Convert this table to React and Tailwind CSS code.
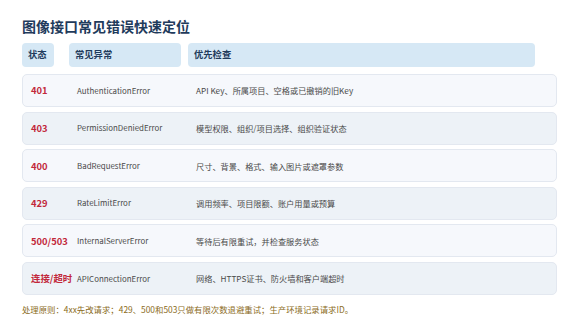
import React from "react";

const rows = [
  ["401", "AuthenticationError", "API Key、所属项目、空格或已撤销的旧Key"],
  ["403", "PermissionDeniedError", "模型权限、组织/项目选择、组织验证状态"],
  ["400", "BadRequestError", "尺寸、背景、格式、输入图片或遮罩参数"],
  ["429", "RateLimitError", "调用频率、项目限额、账户用量或预算"],
  ["500/503", "InternalServerError", "等待后有限重试，并检查服务状态"],
  ["连接/超时", "APIConnectionError", "网络、HTTPS证书、防火墙和客户端超时"],
];

export default function App() {
  return (
    <div
      className="w-[579px] h-[326px] bg-white pl-[22px] pt-[15px] overflow-hidden"
      style={{ fontFamily: '"Noto Sans CJK SC", "Noto Sans", sans-serif' }}
    >
      <h1 className="text-[14px] leading-[22px] font-bold text-[#1f3b5c]">
        图像接口常见错误快速定位
      </h1>
      <div className="mt-[6px] flex h-[24px] text-[9.3px] font-bold text-[#1f3b5c]">
        <div className="w-[32px] rounded-[4px] bg-[#d6e8f5] flex items-center pl-[6px]">状态</div>
        <div className="ml-[15px] w-[112px] rounded-[4px] bg-[#d6e8f5] flex items-center pl-[6px]">常见异常</div>
        <div className="ml-[7px] w-[347px] rounded-[4px] bg-[#d6e8f5] flex items-center pl-[6px]">优先检查</div>
      </div>
      <div className="mt-[7px] flex flex-col gap-[4.6px] w-[535px]">
        {rows.map((r, i) => (
          <div
            key={i}
            className={`h-[33px] rounded-[5px] border border-[#e3e8f0] flex items-center pl-[8px] ${
              i % 2 === 0 ? "bg-[#f6f8fc]" : "bg-[#edf2f7]"
            }`}
          >
            <div className="w-[46px] shrink-0 text-[9.4px] font-bold text-[#c2283b] whitespace-nowrap">{r[0]}</div>
            <div className="w-[119px] shrink-0 text-[7.9px] text-[#4a4a4a] whitespace-nowrap">{r[1]}</div>
            <div className="text-[8.2px] text-[#4a4a4a] whitespace-nowrap">{r[2]}</div>
          </div>
        ))}
      </div>
      <div className="mt-[8px] text-[8.4px] leading-[13px] text-[#8b6c1c] whitespace-nowrap">
        处理原则：4xx先改请求；429、500和503只做有限次数退避重试；生产环境记录请求ID。
      </div>
    </div>
  );
}
